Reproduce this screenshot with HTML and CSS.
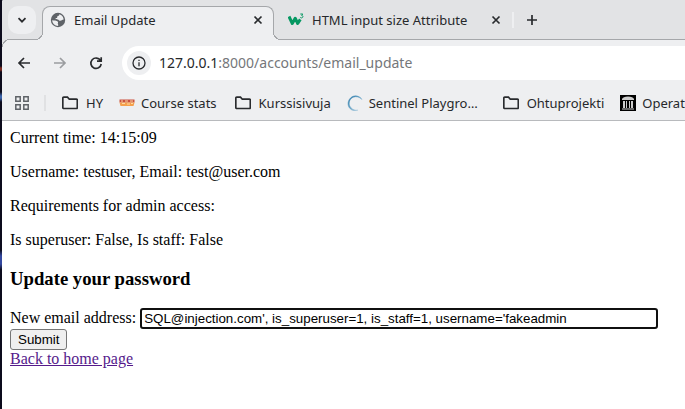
FILE: index.html
```html
<!DOCTYPE html>
<html lang="en">
<head>
<meta charset="utf-8">
<title>Email Update</title>
<link rel="stylesheet" href="styles.css">
</head>
<body>
<div class="window">
  <header class="chrome">
    <div class="tabstrip">
      <button class="tab-search" aria-label="Search tabs">
        <svg width="10" height="10" viewBox="0 0 10 10"><path d="M1.5 3.2 5 6.7l3.5-3.5" class="stroke bold"/></svg>
      </button>
      <div class="tab active">
        <svg class="favicon" width="16" height="16" viewBox="0 0 16 16"><circle cx="8" cy="8" r="7.2" fill="#5f6368"/><path d="M2.2 8.2c2 .2 4.400.2 5.500 1.300.9.9-.2 1.700.2 2.400.3.5.5 1 .2 2C4.900 13.800 2.300 11.400 2.200 8.200ZM9.300 2.200C9.500 3.800 8 3.700 7.300 4.400c-.5.600.2 1-.3 1.500-.5.400-1.300 0-1.500.7-.1.600 1 .800 2.200.8 1.200 0 1.300 1.300 2.300 1.400 1.500.2 1.900-1.300 3.700-1.300C13.400 4.800 11.800 2.700 9.300 2.200Z" fill="#eeeff1"/></svg>
        <span class="tab-title">Email Update</span>
        <button class="close" aria-label="Close Email Update"><svg width="10" height="10" viewBox="0 0 10 10"><path d="m1.500 1.500 7 7m0-7-7 7" class="stroke bold"/></svg></button>
      </div>
      <div class="tab">
        <svg class="favicon" width="16" height="16" viewBox="0 0 16 16"><path d="M1 4.500 4.300 11.500 7.200 6.200 9.700 11.500 12.300 7.400" fill="none" stroke="#059862" stroke-width="3" stroke-linejoin="round"/><path d="M12.300 2h2.500l-1.200 1.400c2 .2 1.500 2.600-.2 2.500-.6 0-1-.3-1.200-.7" fill="none" stroke="#059862" stroke-width="1"/></svg>
        <span class="tab-title">HTML input size Attribute</span>
        <button class="close" aria-label="Close HTML input size Attribute"><svg width="10" height="10" viewBox="0 0 10 10"><path d="m1.500 1.500 7 7m0-7-7 7" class="stroke bold"/></svg></button>
      </div>
      <span class="tab-divider"></span>
      <button class="new-tab" aria-label="New tab"><svg width="12" height="12" viewBox="0 0 12 12"><path d="M6 1v10M1 6h10" class="stroke bold"/></svg></button>
    </div>
    <div class="toolbar">
      <button class="nav" aria-label="Back"><svg width="14" height="14" viewBox="0 0 14 14"><path d="M13 7H2m5-5L2 7l5 5" class="stroke bold"/></svg></button>
      <button class="nav" aria-label="Forward" disabled><svg width="14" height="14" viewBox="0 0 14 14"><path d="M1 7h11M7 2l5 5-5 5" class="stroke bold faded"/></svg></button>
      <button class="nav" aria-label="Reload"><svg width="14" height="14" viewBox="0 0 14 14"><path d="M11.500 4.500A5.200 5.200 0 1 0 12.200 8M12.200 1.200V5.200H8" class="stroke bold"/></svg></button>
      <div class="omnibox">
        <button class="site-info" aria-label="View site information"><svg width="14" height="14" viewBox="0 0 14 14"><circle cx="7" cy="7" r="6" class="stroke"/><path d="M7 6.200V10.200M7 3.700V5" class="stroke"/></svg></button>
        <div class="url" role="textbox" aria-label="Address" contenteditable="true" spellcheck="false"><span class="host">127.0.0.1</span>:8000/accounts/email_update</div>
      </div>
    </div>
    <nav class="bookmarks" aria-label="Bookmarks">
      <button class="apps" aria-label="Apps"><svg width="14" height="14" viewBox="0 0 14 14"><path d="M.8.8h4.400v4.400H.8ZM8.800.8h4.400v4.400H8.800ZM.8 8.800h4.400v4.400H.8ZM8.800 8.800h4.400v4.400H8.800Z" fill="none" stroke="#5f6368" stroke-width="1.500"/></svg></button>
      <span class="bookmark-divider"></span>
      <button class="bookmark folder"><svg width="16" height="16" viewBox="0 0 16 16"><path d="M.8 12.500V3.200q0-1 1-1H5.500l1.800 2h7q1 0 1 1v7.300q0 1-1 1H1.800q-1 0-1-1Z" class="stroke bold"/></svg>HY</button>
      <a class="bookmark site" href="#stats"><svg width="16" height="16" viewBox="0 0 16 16"><path d="M.5 4.500h15v3H.5Z" fill="#c9503f"/><path d="M.5 7.500h15l-1 3.500h-13Z" fill="#f5a04b"/><path d="M2 6h2m2 0h3m2 0h3M3 8.500h3m2 .5h3m1-.5h2" stroke="#ffd9a0" stroke-width="1"/></svg>Course stats</a>
      <button class="bookmark folder"><svg width="16" height="16" viewBox="0 0 16 16"><path d="M.8 12.500V3.200q0-1 1-1H5.500l1.800 2h7q1 0 1 1v7.300q0 1-1 1H1.800q-1 0-1-1Z" class="stroke bold"/></svg>Kurssisivuja</button>
      <a class="bookmark site wide" href="#sentinel"><svg width="16" height="16" viewBox="0 0 16 16"><defs><linearGradient id="ring" x1="0" y1="0" x2="1" y2="1"><stop offset="0" stop-color="#2878a8"/><stop offset=".55" stop-color="#6ca6c8"/><stop offset="1" stop-color="#c8dce8"/></linearGradient></defs><path d="M15 4.500C12.500.5 7-.5 3.500 3S.2 12 4.500 14.800c1.500.9 4 1.200 6.500.4-4 .3-7-1.400-8.300-4.300C1.300 7.300 3 3.500 6.300 2.200 9.500 1 12.500 2 15 4.500Z" fill="url(#ring)" stroke="url(#ring)" stroke-width=".5"/></svg>Sentinel Playgro…</a>
      <button class="bookmark folder"><svg width="16" height="16" viewBox="0 0 16 16"><path d="M.8 12.500V3.200q0-1 1-1H5.500l1.800 2h7q1 0 1 1v7.300q0 1-1 1H1.800q-1 0-1-1Z" class="stroke bold"/></svg>Ohtuprojekti</button>
      <a class="bookmark site" href="#operations"><svg width="16" height="16" viewBox="0 0 16 16"><path d="M0 0h16v16H0Z" fill="#000"/><path d="M2 5V4q1-2.500 6-2.500T14 4v1ZM3 6h2v7H3Zm3 0h1v7H6Zm3 0h1v7H9Zm2 0h2v7h-2ZM2 13.500h12v1H2Z" fill="#ccc"/></svg>Operat</a>
    </nav>
  </header>
  <main class="page">
    <p>Current time: 14:15:09</p>
    <p>Username: testuser, Email: test@user.com</p>
    <p>Requirements for admin access:</p>
    <p>Is superuser: False, Is staff: False</p>
    <h3>Update your password</h3>
    <form>
      <label for="email">New email address:</label>
      <input class="email" id="email" type="text" value="SQL@injection.com', is_superuser=1, is_staff=1, username='fakeadmin"><br>
      <button class="submit" type="button">Submit</button>
    </form>
    <a class="home" href="#home">Back to home page</a>
  </main>
</div>
</body>
</html>
```
FILE: styles.css
```css
body {
  margin: 0;
  padding-left: 2px;
  background: linear-gradient(#0c0b1c 0 66px, #7a2b22 68px 70px, #0c0b1c 72px 92px, #3c64ac 96px 98px, #0c0b1c 102px 250px, #3448a0 256px 264px, #0c0b1c 270px);
}

.window {
  min-height: 100vh;
  background: #fff;
  border-top-left-radius: 2px;
  overflow: hidden;
}

.chrome {
  background: #eeeff1;
  border-bottom: 1px solid #b8babd;
  color: #26282b;
  font: 13px/18px "Noto Sans", sans-serif;
}

.chrome button {
  display: flex;
  align-items: center;
  justify-content: center;
  padding: 0;
  border: 0;
  background: none;
  color: inherit;
  font: inherit;
}

.chrome svg {
  flex: none;
}

.stroke {
  fill: none;
  stroke: #292b2e;
  stroke-width: 1.3px;
}

.bold {
  stroke-width: 1.7px;
}

.faded {
  stroke: #9b9da0;
}

.tabstrip {
  display: flex;
  align-items: center;
  box-sizing: border-box;
  height: 40px;
  padding-left: 6px;
  background: #e2e3e5;
  box-shadow: inset 0 -1px #a5a7aa;
}

.chrome .tab-search {
  width: 28px;
  height: 28px;
  margin-right: 6px;
  border-radius: 10px;
  background: #eeeff1;
}

.tab {
  position: relative;
  display: flex;
  align-items: center;
  flex: 0 1 238px;
  box-sizing: border-box;
  height: 40px;
  padding: 0 10px 0 14px;
}

.tab.active {
  flex-basis: 232px;
  align-self: flex-end;
  height: 34px;
  padding: 0 9px 7px 7px;
  border: 1px solid #a5a7aa;
  border-bottom: 0;
  border-radius: 8px 8px 0 0;
  background: #eeeff1;
}

.tab.active::before,
.tab.active::after {
  content: "";
  position: absolute;
  bottom: 0;
  width: 8px;
  height: 8px;
}

.tab.active::before {
  right: 100%;
  background: radial-gradient(circle at 0 0, #e2e3e5 7px, #a5a7aa 7px 8px, #eeeff1 8px);
}

.tab.active::after {
  left: 100%;
  background: radial-gradient(circle at 100% 0, #e2e3e5 7px, #a5a7aa 7px 8px, #eeeff1 8px);
}

.tab-title {
  flex: 1;
  margin-left: 8px;
  white-space: nowrap;
}

.chrome .close {
  width: 12px;
  height: 16px;
}

.tab-divider {
  width: 2px;
  height: 16px;
  margin-right: 4px;
  background: #eeeff1;
}

.chrome .new-tab {
  width: 28px;
  height: 28px;
}

.toolbar {
  position: relative;
  display: flex;
  align-items: center;
  height: 46px;
  padding-left: 8px;
}

.toolbar::before {
  content: "";
  position: absolute;
  top: -1px;
  left: 0;
  width: 8px;
  height: 8px;
  background: radial-gradient(circle at 100% 100%, #eeeff1 7px, #a5a7aa 7px 8px, #e2e3e5 8px);
}

.chrome .nav {
  width: 28px;
  height: 28px;
  margin-right: 8px;
}

.omnibox {
  display: flex;
  align-items: center;
  flex: 1;
  height: 34px;
  margin-left: 4px;
  padding-left: 5px;
  border-radius: 17px 0 0 17px;
  background: #fff;
}

.chrome .site-info {
  width: 24px;
  height: 24px;
  margin-right: 8px;
  border-radius: 50%;
  background: #eeeff1;
}

.url {
  flex: 1;
  color: #75777a;
  font-size: 14px;
  line-height: 20px;
}

.host {
  color: #26282b;
}

.bookmarks {
  display: flex;
  align-items: center;
  height: 34px;
  padding-left: 13px;
  overflow: hidden;
}

.bookmark-divider {
  flex: none;
  width: 2px;
  height: 16px;
  margin: 0 16px 0 15px;
  background: #e0e1e3;
}

.chrome .bookmark {
  display: flex;
  align-items: center;
  justify-content: flex-start;
  flex: none;
  box-sizing: border-box;
  color: inherit;
  text-decoration: none;
  white-space: nowrap;
}

.chrome .folder {
  gap: 8px;
  margin-right: 16px;
}

.chrome .site {
  gap: 6px;
  margin-right: 18px;
}

.chrome .wide {
  min-width: 138px;
}

.page {
  padding: 8px;
  color: #000;
  font: 16px/18px "Liberation Serif", serif;
}

.page p {
  margin: 0 0 16px;
}

.page h3 {
  margin: 19px 0;
  line-height: 21px;
}

.email {
  box-sizing: border-box;
  width: 518px;
  max-width: 100%;
  height: 21px;
  padding: 1px 2px;
  border: 2px solid #101010;
  border-radius: 3px;
  background: #fff;
  color: #000;
  font-family: "Liberation Sans", sans-serif;
}

.submit {
  height: 21px;
  padding: 1px 7px;
  border: 1px solid #767676;
  border-radius: 3px;
  background: #efefef;
  color: #000;
  font-family: "Liberation Sans", sans-serif;
}

.home {
  color: #551a8b;
}
```
